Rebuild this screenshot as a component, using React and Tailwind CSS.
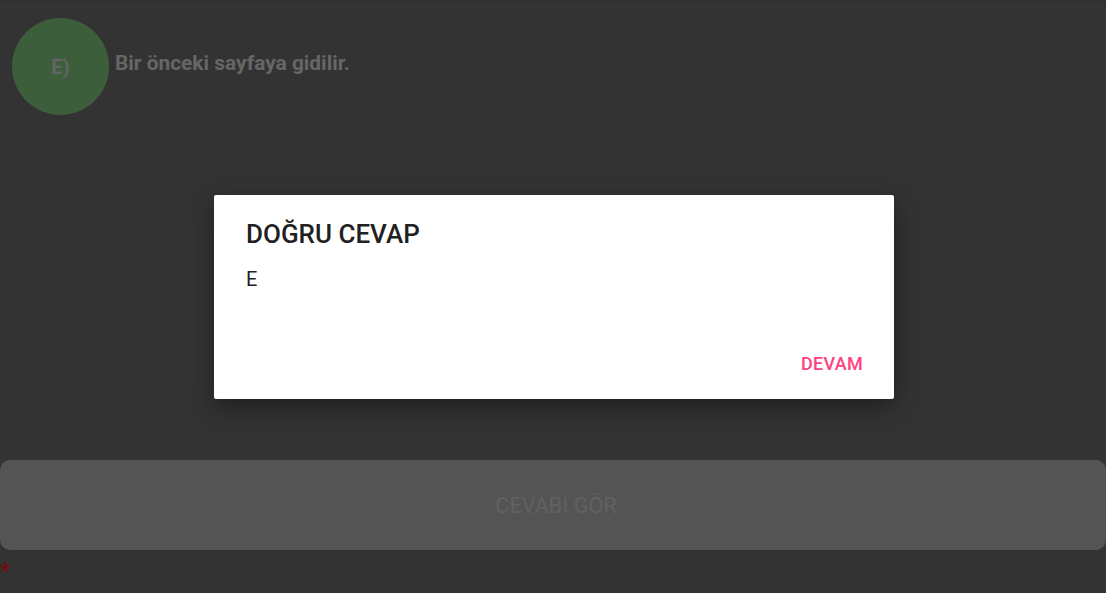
export default function App() {
  return (
    <div
      className="relative w-[1106px] h-[593px] overflow-hidden bg-[#333333]"
      style={{ fontFamily: "Roboto, 'Noto Sans', sans-serif" }}
    >
      <div className="h-[3px] bg-[#2f3134]" />
      <div className="flex items-center pl-[12px] pt-[15px]">
        <div className="w-[97px] h-[97px] rounded-full bg-[#3d5e3b] flex items-center justify-center">
          <span className="text-[20px] font-bold text-[#646464]">E)</span>
        </div>
        <span className="ml-[6px] -mt-[6px] text-[20.9px] font-bold text-[#666666]">
          Bir önceki sayfaya gidilir.
        </span>
      </div>
      <div className="mt-[345px] h-[90px] rounded-[10px] bg-[#545454] flex items-center justify-center">
        <span className="mt-[2px] ml-[6px] text-[21.7px] text-[#616161]">CEVABI GÖR</span>
      </div>
      <div className="mt-[6px] h-[30px] text-[24px] leading-[30px] text-[#7a0a0a]">*</div>

      <div className="absolute inset-0 pl-[2px] flex items-center justify-center">
        <div className="w-[680px] h-[204px] bg-white rounded-[2px] shadow-[0_8px_24px_rgba(0,0,0,0.4)] flex flex-col pl-[32px] pr-[31px]">
          <div className="pt-[22px] text-[26px] leading-[34px] font-medium text-[#212121]">
            DOĞRU CEVAP
          </div>
          <div className="mt-[14px] text-[20px] leading-[28px] text-[#212121]">E</div>
          <div className="mt-auto mb-[17px] flex justify-end">
            <button className="h-[36px] text-[18px] font-medium text-[#ff4081] tracking-[0.3px]">
              DEVAM
            </button>
          </div>
        </div>
      </div>
    </div>
  );
}
